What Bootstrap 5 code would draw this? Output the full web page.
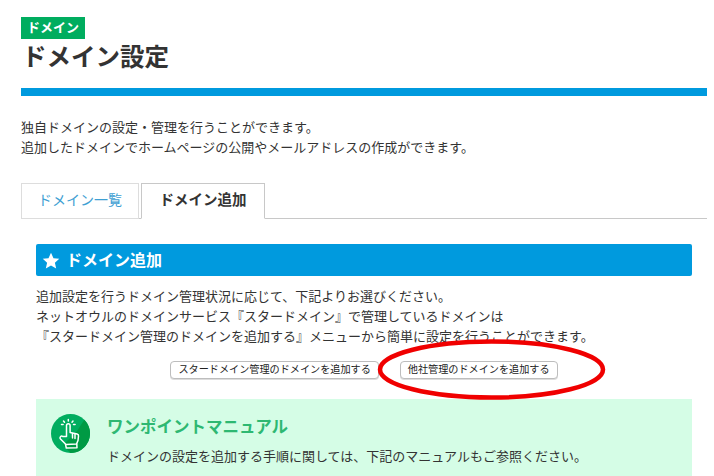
<!DOCTYPE html>
<html lang="ja">
<head>
  <meta charset="UTF-8">
  <title>ドメイン設定</title>
  <link href="https://cdn.jsdelivr.net/npm/bootstrap@5.3.0/dist/css/bootstrap.min.css" rel="stylesheet">
  <style>
    html, body { height: 476px; overflow: hidden; }
    body {
      font-family: "Liberation Sans", "Noto Sans CJK JP", sans-serif;
      font-size: 13px;
      line-height: 20px;
      color: #333;
      background: #fff;
    }
    .page-wrap { padding: 17px 7px 0 21px; }
    .cat-tag {
      display: block;
      width: 64px;
      height: 22px;
      background: #00ad5f;
      color: #fff;
      font-size: 13px;
      font-weight: 700;
      line-height: 21px;
      text-align: center;
    }
    .page-title {
      font-size: 24.5px;
      font-weight: 700;
      line-height: 32px;
      margin: 3px 0 0 1px;
      color: #333;
    }
    .title-rule { height: 8px; background: #009ade; margin-top: 14px; }
    .lead-text { margin: 22px 0 0; }
    .tab-row {
      margin-top: 25px;
      border-bottom: 1px solid #c8c8c8;
      gap: 2px;
      height: 36px;
    }
    .tab-item {
      height: 36px;
      border: 1px solid #ddd;
      background: #fff;
      color: #3f9fd3;
      font-size: 14px;
      line-height: 33px;
      text-align: center;
      text-decoration: none;
    }
    .tab-list { width: 118px; }
    .tab-add {
      width: 124px;
      border-color: #c8c8c8;
      border-bottom-color: #fff;
      color: #333;
      font-size: 14.5px;
      font-weight: 700;
    }
    .panel-wrap { padding: 25px 15px 0; }
    .panel-head {
      height: 32px;
      background: #009ade;
      border-radius: 2px;
      color: #fff;
      font-size: 16px;
      font-weight: 700;
      padding: 1px 0 0 6px;
      gap: 6px;
    }
    .panel-text { margin: 11px 0 0; }
    .btn-row { margin-top: 14px; gap: 21px; }
    .add-btn {
      height: 18px;
      padding: 0 7px;
      border: 1px solid #bdbdbd;
      border-radius: 4px;
      background: #fff;
      color: #222;
      font-size: 10.150px;
      line-height: 16px;
      white-space: nowrap;
      box-shadow: 0 1px 0 #ddd;
    }
    .manual-box {
      position: relative;
      margin-top: 20px;
      height: 90px;
      background: #d5fde6;
      padding: 15px 15px 0;
      gap: 17px;
    }
    .manual-icon { flex: 0 0 39px; width: 39px; height: 39px; }
    .manual-title {
      font-size: 16.500px;
      font-weight: 700;
      line-height: 24px;
      color: #2eb872;
      margin: 1px 0 0;
    }
    .manual-text { margin: 8px 0 0; }
    .red-ring {
      position: absolute;
      left: 377px;
      top: 339px;
      width: 229px;
      height: 61px;
      pointer-events: none;
    }
  </style>
</head>
<body>
  <div class="page-wrap">
    <span class="cat-tag">ドメイン</span>
    <h1 class="page-title">ドメイン設定</h1>
    <div class="title-rule"></div>
    <p class="lead-text">独自ドメインの設定・管理を行うことができます。<br>追加したドメインでホームページの公開やメールアドレスの作成ができます。</p>

    <div class="tab-row d-flex">
      <a class="tab-item tab-list" href="#">ドメイン一覧</a>
      <a class="tab-item tab-add" href="#">ドメイン追加</a>
    </div>

    <div class="panel-wrap">
      <div class="panel-head d-flex align-items-center">
        <svg width="18" height="18" viewBox="0 0 24 24" aria-hidden="true"><path fill="#fff" d="M12 1l3.3 7.3 7.7.8-5.8 5.2 1.7 7.7L12 18l-6.9 4 1.7-7.7L1 9.1l7.7-.8z"/></svg>
        <span>ドメイン追加</span>
      </div>
      <p class="panel-text">追加設定を行うドメイン管理状況に応じて、下記よりお選びください。<br>ネットオウルのドメインサービス『スタードメイン』で管理しているドメインは<br>『スタードメイン管理のドメインを追加する』メニューから簡単に設定を行うことができます。</p>
      <div class="btn-row d-flex justify-content-center">
        <button type="button" class="add-btn">スタードメイン管理のドメインを追加する</button>
        <button type="button" class="add-btn">他社管理のドメインを追加する</button>
      </div>
      <div class="manual-box d-flex">
        <svg class="manual-icon" viewBox="0 0 39 39" aria-hidden="true">
          <circle cx="19.5" cy="19.5" r="19.5" fill="#00ad5f"/>
          <path fill="#009a44" d="M33.300 5.700A19.500 19.500 0 0 1 19.500 39L12 31l14-14z"/>
          <g fill="none" stroke="#fff" stroke-width="1.500" stroke-linecap="round" stroke-linejoin="round">
            <path d="M15.500 22.500V11.500a1.800 1.800 0 0 1 3.600 0v7l7 1.500a1.800 1.800 0 0 1 1.400 2l-.5 4.500-1.500 3.500-10.500.5-5.500-5.500a1.700 1.700 0 0 1 2.300-2.500z"/>
            <path d="M21.500 19.500v4.500M24 20v4.500M14.500 30.500l.8 3.500 10.700-.2-.2-3.800"/>
            <path d="M17.300 5.500v1.500M12.500 7l1 1.200M22 7l-1 1.200M10.500 10.500h1.600M22.500 10.500h1.600"/>
          </g>
        </svg>
        <div>
          <h2 class="manual-title">ワンポイントマニュアル</h2>
          <p class="manual-text">ドメインの設定を追加する手順に関しては、下記のマニュアルもご参照ください。</p>
        </div>
      </div>
    </div>
  </div>
  <svg class="red-ring" viewBox="0 0 229 61" aria-hidden="true">
    <ellipse cx="114.500" cy="30.500" rx="111.500" ry="28" fill="none" stroke="#f00000" stroke-width="4.500"/>
  </svg>
</body>
</html>
